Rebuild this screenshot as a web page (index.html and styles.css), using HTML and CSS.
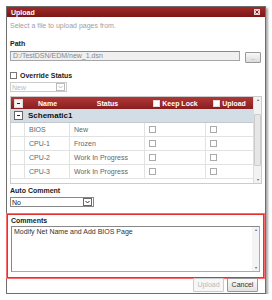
FILE: index.html
```html
<!DOCTYPE html>
<html>
<head>
<meta charset="utf-8">
<link rel="stylesheet" href="styles.css">
</head>
<body>
<div class="dialog">
  <div class="titlebar">
    <span class="title">Upload</span>
    <span class="close"><svg width="6" height="6" viewBox="0 0 6 6"><rect width="6" height="6" fill="#e8d4d4"/><path d="M1.5 1.5L4.5 4.5M4.5 1.5L1.5 4.5" stroke="#8b1c1c" stroke-width="1"/></svg></span>
  </div>
  <div class="content">
    <div class="intro">Select a file to upload pages from.</div>
    <div class="label path-label">Path</div>
    <div class="path-row">
      <div class="path-input">D:/TestDSN/EDM/new_1.dsn</div>
      <div class="browse">...</div>
    </div>
    <div class="override"><span class="cb"></span><span class="label">Override Status</span></div>
    <div class="select disabled"><span>New</span><span class="arrow"><svg width="5" height="4" viewBox="0 0 5 4"><path d="M0.5 1L2.5 3L4.5 1" stroke="#bbb" fill="none"/></svg></span></div>
    <div class="grid">
      <div class="grid-main">
        <div class="ghead">
          <div class="c0"><span class="minus"></span></div>
          <div class="c1">Name</div>
          <div class="c2">Status</div>
          <div class="c3"><span class="cbw"></span>Keep Lock</div>
          <div class="c4"><span class="cbw"></span>Upload</div>
        </div>
        <div class="group"><span class="minus2"></span><span>Schematic1</span></div>
        <div class="row"><div class="c0"></div><div class="c1">BIOS</div><div class="c2">New</div><div class="c3"><span class="cbs"></span></div><div class="c4"><span class="cbs"></span></div></div>
        <div class="row"><div class="c0"></div><div class="c1">CPU-1</div><div class="c2">Frozen</div><div class="c3"><span class="cbs"></span></div><div class="c4"><span class="cbs"></span></div></div>
        <div class="row"><div class="c0"></div><div class="c1">CPU-2</div><div class="c2">Work In Progress</div><div class="c3"><span class="cbs"></span></div><div class="c4"><span class="cbs"></span></div></div>
        <div class="row"><div class="c0"></div><div class="c1">CPU-3</div><div class="c2">Work In Progress</div><div class="c3"><span class="cbs"></span></div><div class="c4"><span class="cbs"></span></div></div>
      </div>
      <div class="vscroll"><span class="sarrow">&#9652;</span><span class="thumb"></span><span class="sarrow">&#9662;</span></div>
    </div>
    <div class="label auto-label">Auto Comment</div>
    <div class="select auto"><span>No</span><span class="arrow"><svg width="5" height="4" viewBox="0 0 5 4"><path d="M0.5 1L2.5 3L4.5 1" stroke="#333" fill="none"/></svg></span></div>
  </div>
  <div class="comments">
    <div class="label">Comments</div>
    <div class="textarea">
      <div class="ta-text">Modify Net Name and Add BIOS Page</div>
      <div class="ta-scroll"><span class="sarrow">&#9652;</span><span class="sarrow">&#9662;</span></div>
    </div>
  </div>
  <div class="footer">
    <div class="btn disabled-btn">Upload</div>
    <div class="btn">Cancel</div>
  </div>
</div>
</body>
</html>
```
FILE: styles.css
```css
html, body { margin: 0; padding: 0; background: #fff; }
body { font-family: "Liberation Sans", Arial, sans-serif; font-size: 7px; color: #333; }
.dialog {
  margin: 6px 0 0 6px;
  width: 258px;
  height: 286px;
  border: 1px solid #6e6e6e;
  box-shadow: 2px 2px 2px rgba(0,0,0,0.35);
  display: flex;
  flex-direction: column;
  background: #fff;
}
.titlebar {
  height: 10px;
  background: linear-gradient(#a02a2a, #7d1515);
  display: flex;
  align-items: center;
  justify-content: space-between;
  padding: 0 5px 0 4px;
}
.title { color: #fff; font-weight: bold; font-size: 7px; }
.close { display: flex; }
.content { padding: 0 3px 0 3px; display: flex; flex-direction: column; }
.intro { color: #a0a0a0; margin-top: 5px; height: 8px; line-height: 8px; }
.label { font-weight: bold; color: #222; }
.path-label { margin-top: 10px; height: 8px; line-height: 8px; }
.path-row { display: flex; align-items: flex-start; margin-top: 3px; }
.path-input {
  width: 226px; height: 8px; line-height: 8px;
  border: 1px solid #a6a6a6; border-top-color: #8a8a8a;
  background: #f0f0f0; color: #888; padding-left: 2px;
}
.browse {
  margin-left: 5px; margin-top: 1px;
  width: 14px; height: 9px;
  border: 1px solid #999; border-radius: 1px;
  background: linear-gradient(#f8f8f8, #dcdcdc);
  color: #777; font-size: 5px; line-height: 10px; text-align: center;
}
.override { display: flex; align-items: center; margin-top: 8px; height: 8px; }
.cb { width: 5px; height: 5px; border: 1px solid #777; background: #fff; margin-right: 3px; }
.select {
  display: flex; justify-content: space-between; align-items: center;
  border: 1px solid #999; height: 8px; padding-left: 1px;
}
.select.disabled { width: 54px; margin-top: 3px; border-color: #ccc; color: #bbb; }
.arrow { width: 7px; height: 6px; border: 1px solid #bbb; display: flex; align-items: center; justify-content: center; margin-right: 1px; }
.select.auto { width: 81px; margin-top: 2px; color: #222; border-color: #888; }
.select.auto .arrow { border-color: #666; }
.grid { display: flex; margin-top: 4px; height: 86px; border: 1px solid #ccc; }
.grid-main { width: 242px; display: flex; flex-direction: column; }
.ghead {
  display: flex; height: 12px; align-items: center;
  background: linear-gradient(#b03838, #8a1e1e);
  color: #fff; font-weight: bold;
}
.c0 { width: 14px; display: flex; justify-content: center; align-items: center; }
.c1 { width: 45px; }
.c2 { width: 75px; }
.c3 { width: 61px; display: flex; align-items: center; }
.c4 { width: 47px; display: flex; align-items: center; }
.ghead .c1 { text-align: center; }
.ghead .c2 { text-align: center; }
.ghead .c3 { justify-content: center; }
.ghead .c4 { justify-content: center; }
.minus { width: 7px; height: 7px; background: #f4f4f4; border: 1px solid #ddd; position: relative; }
.minus::after { content: ""; position: absolute; left: 2px; top: 3px; width: 3px; height: 1px; background: #222; }
.cbw { width: 5px; height: 5px; background: #fff; border: 1px solid #ddd; margin-right: 2px; }
.group {
  display: flex; align-items: center; height: 14px;
  background: #d3dde6; border-bottom: 1px solid #c2c8ce;
  font-weight: bold; font-size: 8px; color: #111; box-sizing: border-box;
}
.minus2 { width: 7px; height: 7px; border: 1px solid #666; background: #fff; margin: 0 5px 0 3px; position: relative; }
.minus2::after { content: ""; position: absolute; left: 2px; top: 3px; width: 3px; height: 1px; background: #222; }
.row { display: flex; height: 14px; align-items: center; border-bottom: 1px solid #e2e2e2; box-sizing: border-box; color: #666; }
.row > div { height: 100%; display: flex; align-items: center; border-right: 1px solid #e2e2e2; box-sizing: border-box; padding-left: 4px; }
.row .c0 { padding-left: 0; }
.row .c4 { border-right: none; }
.cbs { width: 5px; height: 5px; border: 1px solid #aaa; background: #fff; }
.vscroll { width: 9px; background: #f2f2f2; border-left: 1px solid #ddd; display: flex; flex-direction: column; align-items: center; justify-content: space-between; }
.sarrow { font-size: 4px; color: #666; line-height: 6px; }
.thumb { width: 5px; height: 50px; background: #e6e6e6; border: 1px solid #ccc; border-radius: 1px; }
.auto-label { margin-top: 3px; height: 8px; line-height: 8px; }
.comments {
  margin: 7px 1px 0 0px;
  border: 1px solid #e53030;
  outline: 1px solid #ff6a6a;
  padding: 2px 3px 3px 3px;
  height: 57px;
}
.comments .label { height: 8px; line-height: 8px; }
.textarea { display: flex; margin-top: 1px; height: 44px; border: 1px solid #aaa; border-left-color: #888; border-top-color: #888; }
.ta-text { flex: 1; padding: 1px 2px; color: #333; }
.ta-scroll { width: 7px; background: #f4f4f4; display: flex; flex-direction: column; justify-content: space-between; align-items: center; }
.footer { display: flex; justify-content: flex-end; gap: 3px; margin-top: auto; padding: 0 7px 1px 0; }
.btn {
  width: 29px; height: 12px; line-height: 12px; text-align: center;
  border: 1px solid #999; border-radius: 1px;
  background: linear-gradient(#fafafa, #e2e2e2);
  color: #333;
}
.disabled-btn { color: #bbb; border-color: #ccc; background: #f7f7f7; }
```
